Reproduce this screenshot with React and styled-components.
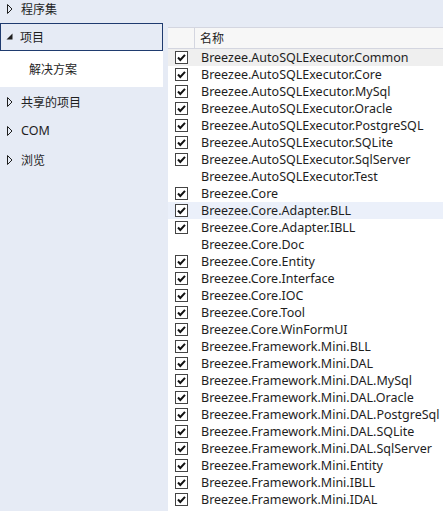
import React from "react";
import styled, { createGlobalStyle } from "styled-components";

const GlobalStyle = createGlobalStyle`
  html, body {
    margin: 0;
    padding: 0;
    background: #e6ebf5;
  }
`;

const FONT = `"Noto Sans", "Noto Sans CJK SC", sans-serif`;

const navItems = [
  { label: "程序集", state: "closed" },
  { label: "项目", state: "open", active: true },
  { label: "解决方案", state: "child" },
  { label: "共享的项目", state: "closed" },
  { label: "COM", state: "closed", latin: true },
  { label: "浏览", state: "closed" },
];

const refs = [
  ["Breezee.AutoSQLExecutor.Common", true],
  ["Breezee.AutoSQLExecutor.Core", true],
  ["Breezee.AutoSQLExecutor.MySql", true],
  ["Breezee.AutoSQLExecutor.Oracle", true],
  ["Breezee.AutoSQLExecutor.PostgreSQL", true],
  ["Breezee.AutoSQLExecutor.SQLite", true],
  ["Breezee.AutoSQLExecutor.SqlServer", true],
  ["Breezee.AutoSQLExecutor.Test", false],
  ["Breezee.Core", true],
  ["Breezee.Core.Adapter.BLL", true],
  ["Breezee.Core.Adapter.IBLL", true],
  ["Breezee.Core.Doc", false],
  ["Breezee.Core.Entity", true],
  ["Breezee.Core.Interface", true],
  ["Breezee.Core.IOC", true],
  ["Breezee.Core.Tool", true],
  ["Breezee.Core.WinFormUI", true],
  ["Breezee.Framework.Mini.BLL", true],
  ["Breezee.Framework.Mini.DAL", true],
  ["Breezee.Framework.Mini.DAL.MySql", true],
  ["Breezee.Framework.Mini.DAL.Oracle", true],
  ["Breezee.Framework.Mini.DAL.PostgreSql", true],
  ["Breezee.Framework.Mini.DAL.SQLite", true],
  ["Breezee.Framework.Mini.DAL.SqlServer", true],
  ["Breezee.Framework.Mini.Entity", true],
  ["Breezee.Framework.Mini.IBLL", true],
  ["Breezee.Framework.Mini.IDAL", true],
];

const Arrow = ({ open }) =>
  open ? (
    <svg width="7" height="7" viewBox="0 0 7 7">
      <path d="M6.5 0.5 L6.5 6.5 L0.5 6.5 Z" fill="#1e1e1e" />
    </svg>
  ) : (
    <svg width="6" height="10" viewBox="0 0 6 10">
      <path d="M0.5 0.5 L5 5 L0.5 9.5 Z" fill="none" stroke="#1e1e1e" strokeWidth="1" />
    </svg>
  );

const Check = () => (
  <svg width="11" height="11" viewBox="0 0 11 11">
    <path d="M2 5.5 L4.3 8 L9 2.8" fill="none" stroke="#111" strokeWidth="2" />
  </svg>
);

const App = () => {
  return (
    <Window>
      <GlobalStyle />
      <Sidebar>
        {navItems.map((item) => (
          <NavItem key={item.label} $active={item.active} $child={item.state === "child"}>
            {item.state !== "child" && (
              <ArrowBox $open={item.state === "open"}>
                <Arrow open={item.state === "open"} />
              </ArrowBox>
            )}
            <NavLabel $latin={item.latin}>{item.label}</NavLabel>
          </NavItem>
        ))}
      </Sidebar>
      <Main>
        <List>
          <HeaderRow>
            <CheckCell $header />
            <HeaderText>名称</HeaderText>
          </HeaderRow>
          {refs.map(([name, checked], i) => (
            <Row key={name} $tone={i === 0 ? "gray" : i === 9 ? "blue" : "none"}>
              <CheckCell>{checked && <Box><Check /></Box>}</CheckCell>
              <RowText>{name}</RowText>
            </Row>
          ))}
        </List>
      </Main>
    </Window>
  );
};

const Window = styled.div`
  width: 443px;
  height: 511px;
  display: flex;
  background: #e6ebf5;
  overflow: hidden;
  font-family: ${FONT};
  color: #1e1e1e;
`;

const Sidebar = styled.div`
  flex: none;
  width: 163px;
  margin-right: 5px;
  display: flex;
  flex-direction: column;
  margin-top: -6px;
`;

const NavItem = styled.div`
  display: flex;
  align-items: center;
  box-sizing: border-box;
  height: ${(p) => (p.$child ? "36px" : p.$active ? "28px" : "29px")};
  padding-left: ${(p) => (p.$child ? "29px" : p.$active ? "5px" : "6px")};
  background: ${(p) => (p.$child ? "#ffffff" : "transparent")};
  border: ${(p) => (p.$active ? "1px solid #1f3b6f" : "none")};
  font-size: 12px;
`;

const ArrowBox = styled.span`
  width: 14px;
  display: flex;
  align-items: center;
  padding-left: ${(p) => (p.$open ? "0" : "1px")};
  margin-top: ${(p) => (p.$open ? "-1px" : "0")};
`;

const NavLabel = styled.span`
  white-space: nowrap;
  font-size: ${(p) => (p.$latin ? "12.5px" : "12px")};
`;

const Main = styled.div`
  flex: 1;
  min-width: 0;
  padding-top: 27px;
  display: flex;
  flex-direction: column;
`;

const List = styled.div`
  flex: 1;
  background: #ffffff;
  overflow: hidden;
`;

const HeaderRow = styled.div`
  display: flex;
  height: 22px;
  box-sizing: border-box;
  border-top: 1px solid #d4d6e0;
  border-bottom: 1px solid #d4d6e0;
  background: #f7f7f7;
  font-size: 12px;
`;

const CheckCell = styled.div`
  width: 27px;
  flex: none;
  display: flex;
  align-items: center;
  padding-left: 7px;
  box-sizing: border-box;
  border-right: ${(p) => (p.$header ? "1px solid #d4d6e0" : "none")};
`;

const HeaderText = styled.div`
  display: flex;
  align-items: center;
  padding-left: 5px;
`;

const Row = styled.div`
  display: flex;
  height: 17px;
  background: ${(p) =>
    p.$tone === "gray" ? "#efefef" : p.$tone === "blue" ? "#ebf0fa" : "transparent"};
`;

const Box = styled.span`
  width: 13px;
  height: 13px;
  box-sizing: border-box;
  border: 1px solid #444444;
  background: #ffffff;
  display: flex;
  align-items: center;
  justify-content: center;
`;

const RowText = styled.div`
  display: flex;
  align-items: center;
  box-sizing: border-box;
  padding-left: 6px;
  padding-top: 1px;
  font-size: 12.5px;
  line-height: 16px;
  height: 17px;
  white-space: nowrap;
`;

export default App;
